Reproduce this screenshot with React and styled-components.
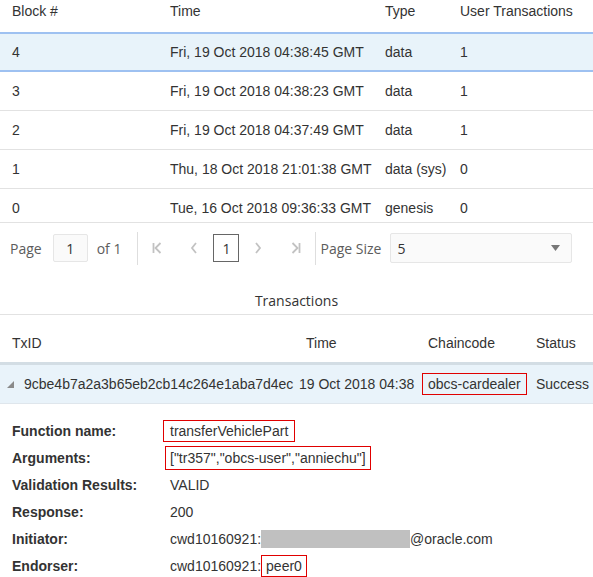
import React from "react";
import styled, { createGlobalStyle } from "styled-components";

const GlobalStyle = createGlobalStyle`
  body {
    margin: 0;
    background: #fff;
    font-family: "Liberation Sans", Arial, sans-serif;
    font-size: 14px;
    color: #333;
  }
`;

const Page = styled.div`
  width: 593px;
`;

const BlockGrid = styled.div`
  display: grid;
  grid-template-columns: 158px 215px 75px 1fr;
  padding-left: 12px;
  line-height: 18px;
  white-space: nowrap;
`;

const BlockHead = styled(BlockGrid)`
  height: 30px;
  padding-top: 2px;
`;

const BlockRow = styled(BlockGrid)`
  padding-top: ${(p) => (p.$selected ? "9px" : "10px")};
  padding-bottom: ${(p) => (p.$last ? "5px" : p.$selected ? "9px" : "10px")};
  background: ${(p) => (p.$selected ? "#e8f3fa" : "#fff")};
  border-top: ${(p) => (p.$selected ? "2px solid #9ec1f1" : "none")};
  border-bottom: ${(p) => (p.$selected ? "2px solid #9ec1f1" : "1px solid #e2e2e2")};
`;

const Pager = styled.div`
  display: flex;
  align-items: center;
  height: 50px;
  padding-left: 10px;
  font-family: "Open Sans", "Noto Sans", sans-serif;
  font-size: 14px;
  color: #5c5c5c;
`;

const PagerText = styled.span`
  margin-left: ${(p) => p.$ml || 0}px;
`;

const PageInput = styled.div`
  width: 33px;
  height: 26px;
  margin-left: 11px;
  border: 1px solid #e6e6e6;
  border-radius: 2px;
  background: #fafafa;
  color: #333;
  display: flex;
  align-items: center;
  justify-content: center;
`;

const Sep = styled.div`
  width: 1px;
  height: 33px;
  background: #dedede;
  margin-left: ${(p) => p.$ml || 0}px;
`;

const NavBtn = styled.div`
  width: ${(p) => p.$w}px;
  height: 28px;
  display: flex;
  align-items: center;
  justify-content: center;
`;

const CurrentPage = styled.div`
  width: 24px;
  height: 26px;
  margin-left: 1px;
  border: 1px solid #666;
  color: #333;
  display: flex;
  align-items: center;
  justify-content: center;
`;

const SizeSelect = styled.div`
  width: 182px;
  height: 30px;
  margin-left: 9px;
  border: 1px solid #e6e6e6;
  border-radius: 2px;
  background: #fafafa;
  color: #333;
  display: flex;
  align-items: center;
  justify-content: space-between;
  padding: 0 11px 0 6px;
  box-sizing: border-box;
`;

const SectionTitle = styled.div`
  font-family: "Open Sans", "Noto Sans", sans-serif;
  font-size: 14px;
  line-height: 20px;
  text-align: center;
  padding: 18px 0 3px;
  border-bottom: 1px solid #e2e2e2;
`;

const TxGrid = styled.div`
  display: grid;
  grid-template-columns: 297px 123px 110px 1fr;
  line-height: 18px;
  white-space: nowrap;
`;

const TxHead = styled(TxGrid)`
  padding: 19px 0 10px;
`;

const TxRow = styled(TxGrid)`
  align-items: center;
  height: 38px;
  background: #e9f3fa;
  border-top: 3px solid #d3dde4;
  border-bottom: 1px solid #dfe6ec;
`;

const Cell = styled.div`
  padding-left: ${(p) => p.$pl || 0}px;
  display: flex;
  align-items: center;
`;

const RedBox = styled.span`
  display: inline-block;
  border: 1px solid #e00000;
  padding: ${(p) => p.$pad || "1px 5px"};
  margin-left: ${(p) => p.$ml || 0}px;
  line-height: 18px;
`;

const Details = styled.div`
  padding: 13px 0 0 12px;
`;

const DetailRow = styled.div`
  display: grid;
  grid-template-columns: 158px 1fr;
  align-items: center;
  height: 27px;
  white-space: nowrap;
`;

const Label = styled.div`
  font-weight: bold;
`;

const Value = styled.div`
  display: flex;
  align-items: center;
`;

const Redacted = styled.span`
  display: inline-block;
  width: 149px;
  height: 18px;
  background: #c0c0c0;
`;

const Chevron = ({ dir = "left", bar = false }) => {
  const flip = dir === "right" ? "scale(-1,1) translate(-10,0)" : undefined;
  return (
    <svg width="10" height="12" viewBox="0 0 10 12">
      <g transform={flip} fill="none" stroke="#c2c2c2" strokeWidth="1.8">
        {bar && <line x1="1.5" y1="1" x2="1.5" y2="11" />}
        <polyline points={bar ? "8.5,1 3.5,6 8.5,11" : "7,1 3,6 7,11"} />
      </g>
    </svg>
  );
};

const Caret = () => (
  <svg width="9" height="6" viewBox="0 0 9 6">
    <polygon points="0,0 9,0 4.5,6" fill="#777" />
  </svg>
);

const Expander = () => (
  <svg width="7" height="7" viewBox="0 0 7 7" style={{ marginRight: 10 }}>
    <polygon points="7,0 7,7 0,7" fill="#8a8a8a" />
  </svg>
);

const blocks = [
  ["4", "Fri, 19 Oct 2018 04:38:45 GMT", "data", "1"],
  ["3", "Fri, 19 Oct 2018 04:38:23 GMT", "data", "1"],
  ["2", "Fri, 19 Oct 2018 04:37:49 GMT", "data", "1"],
  ["1", "Thu, 18 Oct 2018 21:01:38 GMT", "data (sys)", "0"],
  ["0", "Tue, 16 Oct 2018 09:36:33 GMT", "genesis", "0"],
];

export default function App() {
  return (
    <Page>
      <GlobalStyle />
      <BlockHead>
        <div>Block #</div>
        <div>Time</div>
        <div>Type</div>
        <div>User Transactions</div>
      </BlockHead>
      {blocks.map((b, i) => (
        <BlockRow key={b[0]} $selected={i === 0} $last={i === blocks.length - 1}>
          {b.map((v, j) => (
            <div key={j}>{v}</div>
          ))}
        </BlockRow>
      ))}

      <Pager>
        <PagerText>Page</PagerText>
        <PageInput>1</PageInput>
        <PagerText $ml={9}>of 1</PagerText>
        <Sep $ml={16} />
        <NavBtn $w={38}>
          <Chevron bar />
        </NavBtn>
        <NavBtn $w={36}>
          <Chevron />
        </NavBtn>
        <CurrentPage>1</CurrentPage>
        <NavBtn $w={38}>
          <Chevron dir="right" />
        </NavBtn>
        <NavBtn $w={38}>
          <Chevron dir="right" bar />
        </NavBtn>
        <Sep />
        <PagerText $ml={4}>Page Size</PagerText>
        <SizeSelect>
          <span>5</span>
          <Caret />
        </SizeSelect>
      </Pager>

      <SectionTitle>Transactions</SectionTitle>

      <TxHead>
        <Cell $pl={12}>TxID</Cell>
        <Cell $pl={9}>Time</Cell>
        <Cell $pl={8}>Chaincode</Cell>
        <Cell $pl={6}>Status</Cell>
      </TxHead>
      <TxRow>
        <Cell $pl={7}>
          <Expander />
          9cbe4b7a2a3b65eb2cb14c264e1aba7d4ec
        </Cell>
        <Cell $pl={2}>19 Oct 2018 04:38</Cell>
        <Cell>
          <RedBox $ml={2}>obcs-cardealer</RedBox>
        </Cell>
        <Cell $pl={6}>Success</Cell>
      </TxRow>

      <Details>
        <DetailRow>
          <Label>Function name:</Label>
          <Value>
            <RedBox $ml={-7} $pad="1px 6px">transferVehiclePart</RedBox>
          </Value>
        </DetailRow>
        <DetailRow>
          <Label>Arguments:</Label>
          <Value>
            <RedBox $ml={-5} $pad="2px 4px">["tr357","obcs-user","anniechu"]</RedBox>
          </Value>
        </DetailRow>
        <DetailRow>
          <Label>Validation Results:</Label>
          <Value>VALID</Value>
        </DetailRow>
        <DetailRow>
          <Label>Response:</Label>
          <Value>200</Value>
        </DetailRow>
        <DetailRow>
          <Label>Initiator:</Label>
          <Value>
            cwd10160921:
            <Redacted />
            @oracle.com
          </Value>
        </DetailRow>
        <DetailRow>
          <Label>Endorser:</Label>
          <Value>
            cwd10160921:
            <RedBox $pad="1px 4px">peer0</RedBox>
          </Value>
        </DetailRow>
      </Details>
    </Page>
  );
}
